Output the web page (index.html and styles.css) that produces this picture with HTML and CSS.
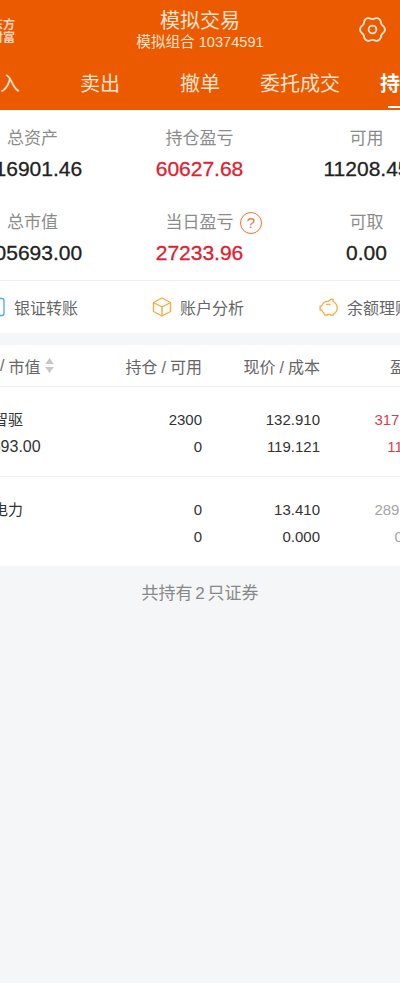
FILE: index.html
```html
<!DOCTYPE html>
<html lang="zh">
<head>
<meta charset="utf-8">
<title>模拟交易</title>
<link rel="stylesheet" href="styles.css">
</head>
<body>
<div class="page">
  <header class="header">
    <div class="topbar">
      <div class="logo">东方<br>财富</div>
      <div class="title">
        <div class="title-main">模拟交易</div>
        <div class="title-sub">模拟组合 10374591</div>
      </div>
      <svg class="gear" viewBox="-1 -1 30 30" fill="none" stroke="#fde3d0" stroke-width="1.9" stroke-linejoin="round">
        <path d="M25.59 10.89Q28.2 14 25.59 17.11Q22.66 19 22.49 22.49Q21.1 26.3 17.11 25.59Q14 24 10.89 25.59Q6.9 26.3 5.51 22.49Q5.34 19 2.41 17.11Q-.2 14 2.41 10.89Q5.34 9 5.51 5.51Q6.9 1.7 10.89 2.41Q14 4 17.11 2.41Q21.1 1.7 22.49 5.51Q22.66 9 25.59 10.89Z"/>
        <circle cx="14" cy="14" r="4"/>
      </svg>
    </div>
    <nav class="tabs">
      <div class="tab">买入</div>
      <div class="tab">卖出</div>
      <div class="tab">撤单</div>
      <div class="tab">委托成交</div>
      <div class="tab tab-active">持仓</div>
    </nav>
  </header>

  <section class="stats">
    <div class="stat"><div class="stat-label">总资产</div><div class="stat-value">316901.46</div></div>
    <div class="stat"><div class="stat-label">持仓盈亏</div><div class="stat-value red">60627.68</div></div>
    <div class="stat"><div class="stat-label">可用</div><div class="stat-value">11208.45</div></div>
    <div class="stat"><div class="stat-label">总市值</div><div class="stat-value">305693.00</div></div>
    <div class="stat"><div class="stat-label label-help">当日盈亏<span class="help">?</span></div><div class="stat-value red">27233.96</div></div>
    <div class="stat"><div class="stat-label">可取</div><div class="stat-value">0.00</div></div>
  </section>

  <section class="actions">
    <div class="action action-bank">
      <svg class="icon" viewBox="0 0 20 20" fill="none" stroke="#4aa8e8" stroke-width="1.3"><rect x="1" y="1.5" width="17" height="17" rx="2"/><path d="M6 7h7M6 10h7M6 13h7"/></svg>
      <span>银证转账</span>
    </div>
    <div class="action action-analysis">
      <svg class="icon" viewBox="0 0 20 20" fill="none" stroke="#f3ac3c" stroke-width="1.4" stroke-linejoin="round"><path d="M10 1l8.500 4.500v9L10 19l-8.500-4.500v-9z"/><path d="M1.500 5.500L10 10l8.500-4.500M10 10v9"/></svg>
      <span>账户分析</span>
    </div>
    <div class="action action-finance">
      <svg class="icon icon-pig" viewBox="0 0 22 20" fill="none" stroke="#f3ac3c" stroke-width="1.4" stroke-linejoin="round"><path d="M5 5.500C6.500 4 8.500 3.300 11 3.500 12 2 14 1 15.500 1.500c.2 1.200 0 2 .1 2.500 2.400 1.400 4.400 3.500 4.400 7 0 3.500-2 5.500-4 6.500l-.5 1.500h-3l-.4-1H9.500l-.4 1h-3l-.6-2C4 15.800 3.500 14.500 3 13.500H1.200V9H3c.4-1.400 1-2.600 2-3.500z"/><path d="M8 7.500c1.500-.8 3-.8 4.500 0"/></svg>
      <span>余额理财</span>
    </div>
  </section>

  <section class="table">
    <div class="table-row table-head">
      <div class="col-name">名称<span class="slash">/</span>市值<svg class="sort" viewBox="0 0 8 14"><path d="M4 0l4 5.500H0z" fill="#c4c7cc"/><path d="M4 14L0 8.500h8z" fill="#c4c7cc"/></svg></div>
      <div class="col-num">持仓<span class="slash">/</span>可用</div>
      <div class="col-num">现价<span class="slash">/</span>成本</div>
      <div class="col-num col-profit">盈亏</div>
    </div>
    <div class="table-row holding">
      <div class="col-name"><div>德赛智驱</div><div class="market">305693.00</div></div>
      <div class="col-num"><div>2300</div><div>0</div></div>
      <div class="col-num"><div>132.910</div><div>119.121</div></div>
      <div class="col-num red-soft"><div>31714.70</div><div>11.58%</div></div>
    </div>
    <div class="table-row holding holding-last">
      <div class="col-name"><div>华能电力</div></div>
      <div class="col-num"><div>0</div><div>0</div></div>
      <div class="col-num"><div>13.410</div><div>0.000</div></div>
      <div class="col-num grey"><div>28912.98</div><div>0.00%</div></div>
    </div>
  </section>

  <footer class="footer">共持有 2 只证券</footer>
</div>
</body>
</html>
```

FILE: styles.css
```css
* { box-sizing: border-box; }
html, body { margin: 0; padding: 0; }
body {
  font-family: "Liberation Sans", "Noto Sans CJK SC", sans-serif;
  background: #f5f6f8;
  color: #333;
}
.page { width: 400px; height: 983px; overflow: hidden; background: #f5f6f8; }

.header { height: 110px; background: #ec5a00; color: #fde3d0; overflow: hidden; }
.topbar { height: 64px; display: grid; grid-template-columns: 1fr auto 1fr; align-items: start; }
.logo {
  width: 15px; margin-top: 17px; font: 700 12px/13px "Noto Sans CJK SC", sans-serif;
  direction: rtl; white-space: nowrap; color: #fbd3bd; overflow: hidden;
}
.title { text-align: center; padding-top: 10px; }
.title-main { font-size: 20px; line-height: 23px; }
.title-sub { font-size: 14.6px; line-height: 18px; }
.gear { width: 29px; height: 29px; margin: 15px 13px 0 0; justify-self: end; }

.tabs { display: flex; margin-left: -50px; width: 500px; height: 46px; }
.tab { width: 100px; flex: none; text-align: center; font-size: 20px; line-height: 40px; position: relative; white-space: nowrap; }
.tab-active { font-weight: 700; color: #fff; }
.tab-active::after {
  content: ""; position: absolute; left: 38px; bottom: 2px; width: 24px; height: 2px; background: #fff;
}

.stats {
  background: #fff; height: 171px; padding-top: 17px; margin-left: -51px; width: 502px;
  display: grid; grid-template-columns: repeat(3, 167px); grid-auto-rows: 84px;
  border-bottom: 1px solid #efefef;
}
.stat { text-align: center; white-space: nowrap; }
.stat-label { font-size: 17px; line-height: 24px; color: #8b8b8b; }
.stat-value { font-size: 21px; line-height: 24px; margin-top: 6px; color: #222; -webkit-text-stroke: .3px currentColor; }
.label-help { position: relative; }
.help {
  position: absolute; left: 124px; top: 1px; width: 22px; height: 22px; border-radius: 50%;
  border: 1.500px solid #e8743a; color: #e8743a; font-size: 15px; line-height: 19px; text-align: center;
}
.red { color: #e0202f; }

.actions { height: 52px; background: #fff; margin-bottom: 12px; white-space: nowrap; font-size: 16px; color: #666; position: relative; }
.action { display: flex; align-items: center; gap: 8px; position: absolute; top: 0; height: 52px; }
.action-bank { left: -14px; }
.action-analysis { left: 152px; }
.action-finance { left: 319px; }
.icon { width: 20px; height: 20px; flex: none; }

.table { background: #fff; }
.table-row {
  display: grid; grid-template-columns: 97px 135px 118px 117px; width: 467px; margin-left: -30px;
}
.table-head { height: 42px; align-items: center; font-size: 16px; color: #666; border-bottom: 1px solid #f0f0f0; }
.table-head .col-name { margin-left: -6px; flex-direction: row; align-items: center; }
.slash { margin: 0 4px; }
.col-name { white-space: nowrap; display: flex; flex-direction: column; }
.col-num { text-align: right; white-space: nowrap; }
.col-profit { padding-right: 15px; }
.sort { width: 9px; height: 15px; margin-left: 5px; flex: none; }
.holding { height: 90px; padding-top: 19px; font-size: 15px; line-height: 27px; color: #333; border-bottom: 1px solid #f0f0f0; }
.holding-last { height: 89px; border-bottom: 0; }
.holding .col-name { margin-left: -7px; }
.market { padding-left: 2px; font-size: 16px; }
.red-soft { color: #d9404f; }
.grey { color: #a5a5a5; }

.footer { text-align: center; font-size: 17px; word-spacing: -2px; line-height: 24px; padding-top: 16px; color: #888; }
```
